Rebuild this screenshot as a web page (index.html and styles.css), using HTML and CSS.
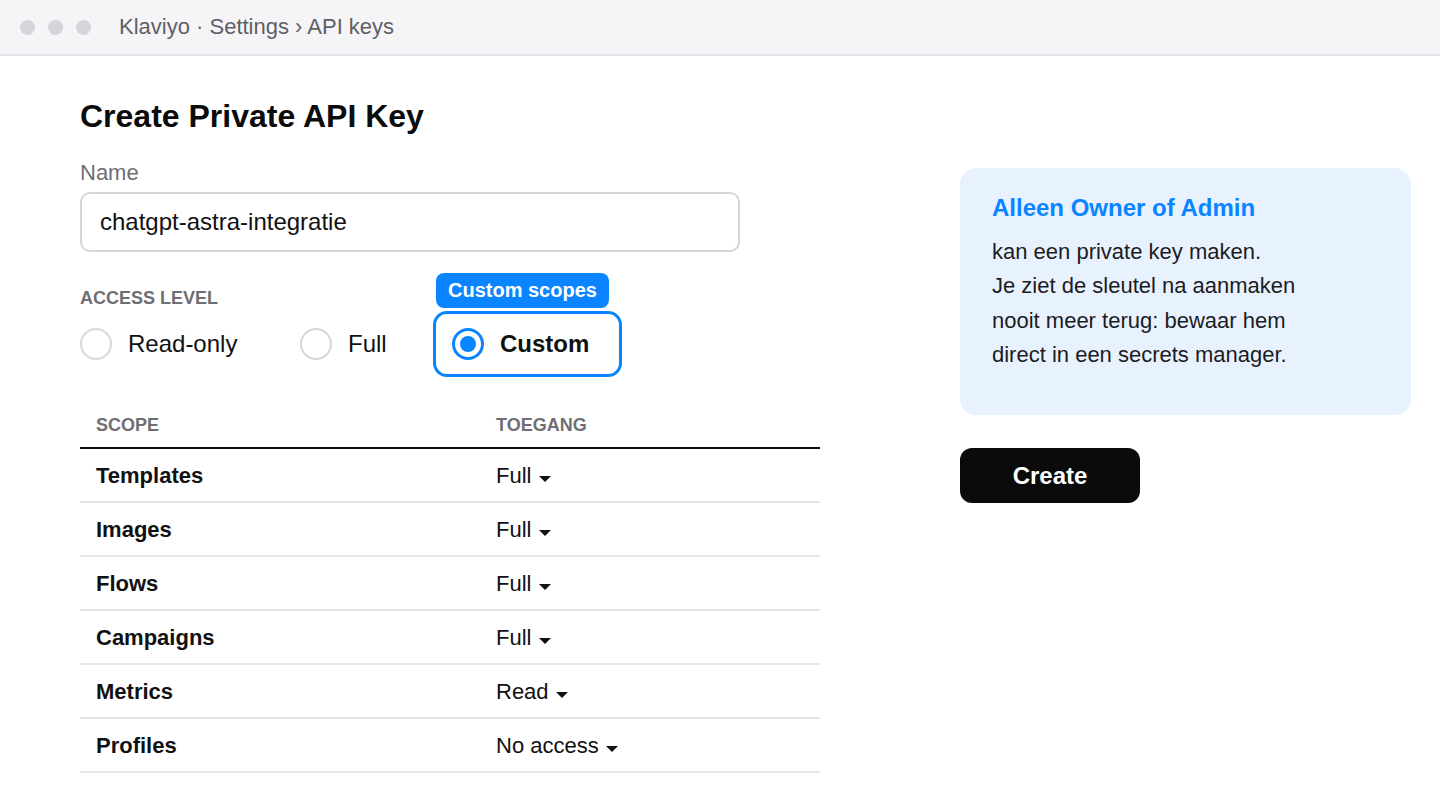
FILE: index.html
```html
<!DOCTYPE html>
<html lang="nl">
<head>
    <meta charset="UTF-8">
    <meta name="viewport" content="width=device-width, initial-scale=1.0">
    <title>Klaviyo · Settings › API keys</title>
    <link rel="stylesheet" href="styles.css">
</head>
<body>
    <div class="titlebar">
        <div class="dots">
            <span class="dot"></span>
            <span class="dot"></span>
            <span class="dot"></span>
        </div>
        <div class="crumbs">Klaviyo · Settings › API keys</div>
    </div>

    <div class="page">
        <div class="form">
            <h1 class="title">Create Private API Key</h1>

            <label class="field-label" for="key-name">Name</label>
            <input id="key-name" type="text" class="text-input" value="chatgpt-astra-integratie">

            <div class="access-head">
                <div class="section-label">Access level</div>
                <div class="badge">Custom scopes</div>
            </div>

            <div class="options">
                <div class="option">
                    <span class="radio"></span>
                    <span>Read-only</span>
                </div>
                <div class="option">
                    <span class="radio"></span>
                    <span>Full</span>
                </div>
                <div class="option selected">
                    <span class="radio checked"></span>
                    <span>Custom</span>
                </div>
            </div>

            <div class="scopes">
                <div class="scope-row head">
                    <div>Scope</div>
                    <div>Toegang</div>
                </div>
                <div class="scope-row">
                    <div class="scope-name">Templates</div>
                    <div>Full <span class="caret"></span></div>
                </div>
                <div class="scope-row">
                    <div class="scope-name">Images</div>
                    <div>Full <span class="caret"></span></div>
                </div>
                <div class="scope-row">
                    <div class="scope-name">Flows</div>
                    <div>Full <span class="caret"></span></div>
                </div>
                <div class="scope-row">
                    <div class="scope-name">Campaigns</div>
                    <div>Full <span class="caret"></span></div>
                </div>
                <div class="scope-row">
                    <div class="scope-name">Metrics</div>
                    <div>Read <span class="caret"></span></div>
                </div>
                <div class="scope-row">
                    <div class="scope-name">Profiles</div>
                    <div>No access <span class="caret"></span></div>
                </div>
            </div>
        </div>

        <div class="side">
            <div class="notice">
                <h2 class="notice-title">Alleen Owner of Admin</h2>
                <p class="notice-text">
                    kan een private key maken.<br>
                    Je ziet de sleutel na aanmaken<br>
                    nooit meer terug: bewaar hem<br>
                    direct in een secrets manager.
                </p>
            </div>
            <button class="create">Create</button>
        </div>
    </div>
</body>
</html>
```

FILE: styles.css
```css
* {
    margin: 0;
    padding: 0;
    box-sizing: border-box;
}

body {
    font-family: "Liberation Sans", Arial, sans-serif;
    background: #ffffff;
    color: #111111;
}

/* window chrome */
.titlebar {
    height: 56px;
    display: flex;
    align-items: center;
    padding-left: 20px;
    background: #f5f5f8;
    border-bottom: 2px solid #e4e4e9;
}

.dots {
    display: flex;
    gap: 13px;
}

.dot {
    width: 15px;
    height: 15px;
    border-radius: 50%;
    background: #d4d4d9;
}

.crumbs {
    margin-left: 28px;
    font-size: 22px;
    line-height: 26px;
    color: #5f5f65;
}

/* page columns */
.page {
    display: flex;
    gap: 140px;
    padding: 40px 0 0 80px;
}

.form {
    flex-shrink: 0;
    width: 740px;
    display: flex;
    flex-direction: column;
}

.title {
    font-size: 32px;
    line-height: 40px;
    font-weight: 700;
    color: #0b0b0c;
}

.field-label {
    margin-top: 24px;
    font-size: 22px;
    line-height: 26px;
    color: #6e6e73;
}

.text-input {
    margin-top: 6px;
    width: 660px;
    height: 60px;
    padding: 0 18px;
    border: 2px solid #d6d6da;
    border-radius: 10px;
    font-family: inherit;
    font-size: 24px;
    color: #111111;
    outline: none;
}

.access-head {
    margin-top: 21px;
    display: flex;
    align-items: flex-end;
}

.section-label {
    width: 356px;
    font-size: 18px;
    line-height: 20px;
    font-weight: 700;
    text-transform: uppercase;
    color: #6e6e73;
}

.badge {
    height: 35px;
    line-height: 35px;
    padding: 0 12px;
    border-radius: 8px;
    background: #0a84ff;
    color: #ffffff;
    font-size: 20px;
    font-weight: 700;
}

.options {
    margin-top: 3px;
    display: grid;
    grid-template-columns: 220px 133px auto;
    align-items: center;
}

.option {
    display: flex;
    align-items: center;
    gap: 16px;
    font-size: 24px;
    line-height: 28px;
    color: #111111;
}

.option.selected {
    justify-self: start;
    width: 189px;
    height: 66px;
    padding-left: 16px;
    border: 3px solid #0a84ff;
    border-radius: 14px;
    font-weight: 700;
}

.radio {
    position: relative;
    width: 32px;
    height: 32px;
    border-radius: 50%;
    border: 2px solid #d6d6da;
    flex-shrink: 0;
}

.radio.checked {
    border: 3px solid #0a84ff;
}

.radio.checked::after {
    content: "";
    position: absolute;
    top: 5px;
    left: 5px;
    width: 16px;
    height: 16px;
    border-radius: 50%;
    background: #0a84ff;
}

/* scope table */
.scopes {
    margin-top: 38px;
}

.scope-row {
    display: grid;
    grid-template-columns: 400px 1fr;
    align-items: center;
    height: 54px;
    padding: 2px 16px 0;
    border-bottom: 2px solid #e5e5ea;
    font-size: 22px;
    line-height: 26px;
}

.scope-row.head {
    height: 34px;
    padding-top: 0;
    align-items: start;
    border-bottom: 2px solid #0b0b0c;
    font-size: 18px;
    line-height: 20px;
    font-weight: 700;
    text-transform: uppercase;
    color: #6e6e73;
}

.scope-name {
    font-weight: 700;
}

.caret {
    display: inline-block;
    margin-left: 1px;
    border-left: 6px solid transparent;
    border-right: 6px solid transparent;
    border-top: 6px solid #111111;
    vertical-align: 1px;
}

/* right column */
.side {
    flex-shrink: 0;
    width: 451px;
    padding-top: 72px;
    display: flex;
    flex-direction: column;
    align-items: flex-start;
}

.notice {
    width: 100%;
    padding: 25px 32px 43px;
    border-radius: 16px;
    background: #e8f2fe;
}

.notice-title {
    font-size: 24px;
    line-height: 30px;
    font-weight: 700;
    color: #0a84ff;
}

.notice-text {
    margin-top: 12px;
    font-size: 22px;
    line-height: 34.3px;
    color: #1c1c1e;
}

.create {
    margin-top: 33px;
    width: 180px;
    height: 55px;
    border: none;
    border-radius: 12px;
    background: #0b0b0c;
    color: #ffffff;
    font-family: inherit;
    font-size: 24px;
    font-weight: 700;
    cursor: pointer;
}
```
